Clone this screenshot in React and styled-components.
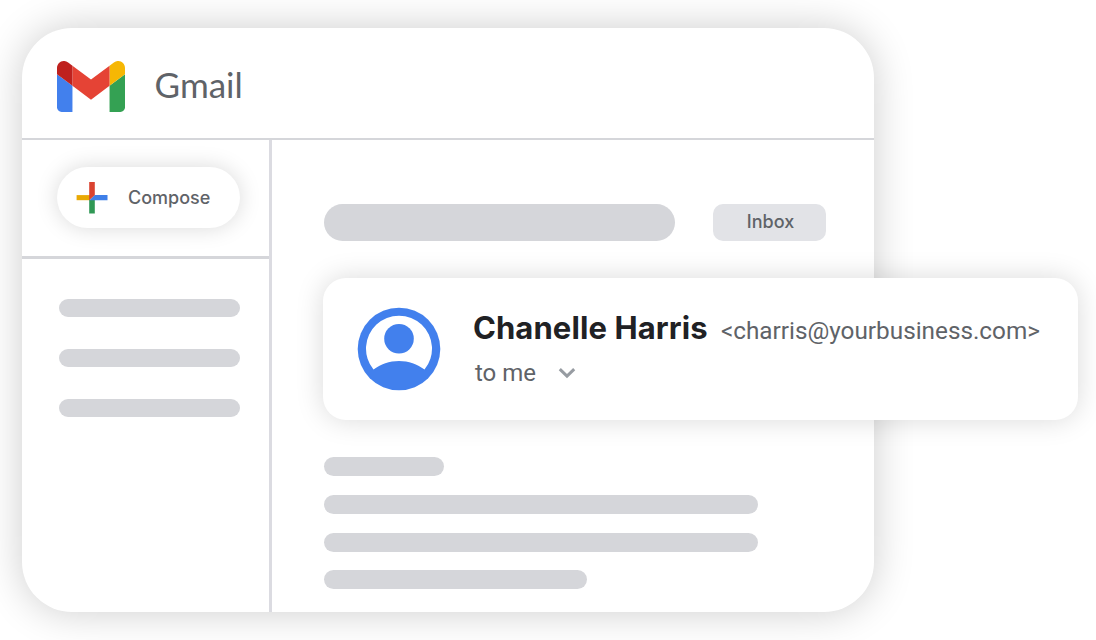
import styled, { createGlobalStyle } from 'styled-components';

const App = () => {
	return (
		<>
			<GlobalStyle />
			<Page>
				<Window>
					<Header>
						<GmailLogo />
						<Brand>Gmail</Brand>
					</Header>
					<Body>
						<Sidebar>
							<ComposeArea>
								<ComposeButton>
									<PlusIcon />
									<span>Compose</span>
								</ComposeButton>
							</ComposeArea>
							<Folders>
								<Bar $width="181px" $height="18px" />
								<Bar $width="181px" $height="18px" />
								<Bar $width="181px" $height="18px" />
							</Folders>
						</Sidebar>
						<Mail>
							<SubjectRow>
								<Bar $width="351px" $height="37px" />
								<Label>Inbox</Label>
							</SubjectRow>
							<Sender>
								<Avatar />
								<SenderInfo>
									<NameRow>
										<Name>Chanelle Harris</Name>
										<Email>&lt;charris@yourbusiness.com&gt;</Email>
									</NameRow>
									<Recipient>
										<span>to me</span>
										<Chevron />
									</Recipient>
								</SenderInfo>
							</Sender>
							<Message>
								<Bar $width="120px" $height="19px" />
								<Bar $width="434px" $height="19px" />
								<Bar $width="434px" $height="19px" />
								<Bar $width="263px" $height="19px" />
							</Message>
						</Mail>
					</Body>
				</Window>
			</Page>
		</>
	);
};

const GmailLogo = () => (
	<svg width="68" height="51" viewBox="52 42 88 66" preserveAspectRatio="none">
		<path fill="#4280ed" d="M58 108h14V74L52 59v43c0 3.32 2.69 6 6 6" />
		<path fill="#34a153" d="M120 108h14c3.32 0 6-2.69 6-6V59l-20 15" />
		<path fill="#f6b704" d="M120 48v26l20-15v-8c0-7.42-8.47-11.65-14.4-7.2" />
		<path fill="#e54335" d="M72 74V48l24 18 24-18v26L96 92" />
		<path fill="#bf211e" d="M52 51v8l20 15V48l-5.6-4.2c-5.94-4.45-14.4-.22-14.4 7.2" />
	</svg>
);

const PlusIcon = () => (
	<svg width="32" height="32" viewBox="0 0 32 32">
		<path fill="#e9a904" d="M.6 13.1H14v5.1H.6z" />
		<path fill="#309855" d="M13.2 18h5.6v13.5h-5.6z" />
		<path fill="#3f7fe8" d="M18.6 13.1h12.9v5.1H13.4z" />
		<path fill="#da4330" d="M13.2 0h5.6v13.1l-5.6 5.1z" />
	</svg>
);

const Avatar = () => (
	<svg width="84" height="84" viewBox="0 0 84 84">
		<circle cx="42" cy="42" r="41.3" fill="#4280ed" />
		<path
			fill="#fff"
			d="M16.5 62.6A33 33 0 1 1 67.5 62.6C60.5 57.3 51.5 54 42 54S23.5 57.3 16.5 62.6z"
		/>
		<circle cx="42" cy="31.8" r="14.8" fill="#4280ed" />
	</svg>
);

const Chevron = () => (
	<svg width="18" height="12" viewBox="0 0 18 12" fill="none">
		<path d="M1.8 2.2 9 9.2l7.2-7" stroke="#979ca2" strokeWidth="3" />
	</svg>
);

const GlobalStyle = createGlobalStyle`
	body {
		margin: 0;
		background: #fff;
		font-family: Inter, 'Liberation Sans', sans-serif;
		color: #5f6368;
	}

	* {
		box-sizing: border-box;
	}

	svg {
		display: block;
		flex-shrink: 0;
	}
`;

const Page = styled.div`
	width: 1096px;
	height: 640px;
	padding: 28px 0 0 22px;
	overflow: hidden;
`;

const Window = styled.div`
	display: flex;
	flex-direction: column;
	width: 852.4px;
	height: 584px;
	border-radius: 50px;
	background: #fff;
	box-shadow: 0 0 40px rgba(0, 0, 0, 0.2);
`;

const Header = styled.header`
	display: flex;
	align-items: flex-start;
	gap: 30px;
	height: 112px;
	padding: 33px 0 0 34.6px;
	border-bottom: 2px solid #d5d6da;
`;

const Brand = styled.span`
	margin-top: 3px;
	font-family: Lato, sans-serif;
	font-size: 35px;
	line-height: 40px;
`;

const Body = styled.div`
	display: flex;
	flex: 1;
`;

const Sidebar = styled.aside`
	flex: none;
	width: 250px;
	border-right: 3px solid #dbdbe1;
`;

const ComposeArea = styled.div`
	height: 119px;
	padding: 27px 0 0 35px;
	border-bottom: 3px solid #d5d6da;
`;

const ComposeButton = styled.button`
	display: flex;
	align-items: center;
	gap: 20px;
	width: 183px;
	height: 61px;
	padding: 0 0 0 19px;
	border: 0;
	border-radius: 31px;
	background: #fff;
	box-shadow: 0 0 22px rgba(0, 0, 0, 0.15);
	color: #5f6368;
	font-family: Inter, sans-serif;
	font-size: 18px;
	font-weight: 500;
	white-space: nowrap;
`;

const Folders = styled.div`
	display: flex;
	flex-direction: column;
	gap: 32px;
	padding: 40px 0 0 37px;
`;

const Bar = styled.div`
	flex: none;
	width: ${({ $width }) => $width};
	height: ${({ $height }) => $height};
	border-radius: 19px;
	background: #d5d6da;
`;

const Mail = styled.main`
	flex: 1;
	min-width: 0;
	padding: 64px 0 0 52px;
`;

const SubjectRow = styled.div`
	display: flex;
	gap: 38px;
`;

const Label = styled.div`
	width: 113px;
	height: 37px;
	padding-left: 2px;
	border-radius: 10px;
	background: #e2e3e7;
	font-size: 18px;
	font-weight: 500;
	line-height: 36px;
	text-align: center;
`;

const Sender = styled.section`
	position: relative;
	display: flex;
	gap: 32px;
	width: 755px;
	height: 142px;
	margin: 37px 0 37px -1px;
	padding: 29.4px 0 0 33.9px;
	border-radius: 23px;
	background: #fff;
	box-shadow: 0 0 28px rgba(0, 0, 0, 0.15);
	white-space: nowrap;
`;

const SenderInfo = styled.div`
	display: flex;
	flex-direction: column;
	gap: 5px;
	padding-top: 1px;
`;

const NameRow = styled.div`
	display: flex;
	align-items: baseline;
	height: 40px;
`;

const Name = styled.h2`
	width: 248px;
	margin: 0;
	color: #202124;
	font-size: 31px;
	font-weight: 650;
	letter-spacing: 0.1px;
	line-height: 40px;
`;

const Email = styled.span`
	font-family: Roboto, sans-serif;
	font-size: 24.3px;
`;

const Recipient = styled.div`
	display: flex;
	align-items: center;
	gap: 22px;
	height: 40px;
	padding-left: 2px;
	font-family: Roboto, sans-serif;
	font-size: 24px;
`;

const Message = styled.div`
	display: flex;
	flex-direction: column;
	gap: 18.8px;
`;

export default App;
